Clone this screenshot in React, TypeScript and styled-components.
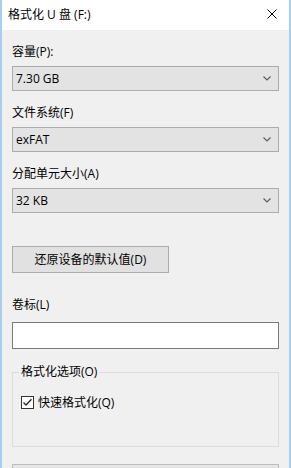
import styled, { createGlobalStyle } from "styled-components";

const GlobalStyle = createGlobalStyle`
  html, body {
    margin: 0;
    padding: 0;
    background: #f0f0f0;
  }
  * {
    box-sizing: border-box;
  }
`

const Window = styled.div`
  display: flex;
  flex-direction: column;
  width: 291px;
  height: 468px;
  overflow: hidden;
  border-left: 2px solid #a9cdee;
  border-right: 2px solid #a9cdee;
  background: #f0f0f0;
  font-family: "Open Sans", "Noto Sans CJK SC", sans-serif;
  font-size: 12px;
  color: #000;
`

const TitleBar = styled.div`
  display: flex;
  align-items: center;
  justify-content: space-between;
  height: 30px;
  padding: 0 6px 0 6px;
  background: #fff;
  flex-shrink: 0;
`

const Title = styled.span`
  line-height: 16px;
`

const CloseIcon = styled.svg`
  width: 10px;
  height: 10px;
  margin-right: 6px;
  margin-top: -2px;
`

const Body = styled.div`
  display: flex;
  flex-direction: column;
  padding: 14px 10px 0 10px;
`

const Field = styled.div`
  display: flex;
  flex-direction: column;
  margin-bottom: 14px;
`

const Label = styled.div<{ $gap?: number }>`
  line-height: 16px;
  margin-bottom: ${({ $gap }) => $gap ?? 6}px;
`

const Combo = styled.div`
  display: flex;
  align-items: center;
  justify-content: space-between;
  height: 25px;
  padding: 0 7px 0 3px;
  background: #e3e3e3;
  border: 1px solid #acacac;
  line-height: 16px;
`

const Chevron = styled.svg`
  width: 8px;
  height: 5px;
`

const ResetButton = styled.div`
  display: flex;
  align-items: center;
  justify-content: center;
  width: 157px;
  height: 27px;
  margin: 19px 0 24px 0;
  background: #e1e1e1;
  border: 1px solid #adadad;
  line-height: 16px;
`

const TextInput = styled.div`
  height: 27px;
  background: #fff;
  border: 1px solid #7a7a7a;
`

const GroupBox = styled.fieldset`
  margin: 15px 0 0 0;
  padding: 14px 8px 36px 8px;
  border: 1px solid #dcdcdc;
  min-width: 0;
`

const Legend = styled.legend`
  padding: 0 2px;
  margin-left: -2px;
  line-height: 16px;
`

const CheckRow = styled.div`
  display: flex;
  align-items: center;
  gap: 4px;
  height: 16px;
`

const CheckBox = styled.svg`
  width: 13px;
  height: 13px;
`

const ProgressBar = styled.div`
  height: 18px;
  margin-top: 17px;
  background: #e6e6e6;
  border: 1px solid #bcbcbc;
  flex-shrink: 0;
`

const ComboBox = ({ value }: { value: string }) => (
  <Combo>
    <span>{value}</span>
    <Chevron viewBox="0 0 8 5">
      <path d="M0.5 0.5 L4 4 L7.5 0.5" fill="none" stroke="#5a5a5a" strokeWidth="1.1" />
    </Chevron>
  </Combo>
)

export default function App() {
  return (
    <>
      <GlobalStyle />
      <Window>
        <TitleBar>
          <Title>格式化 U 盘 (F:)</Title>
          <CloseIcon viewBox="0 0 10 10">
            <path d="M0.5 0.5 L9.5 9.5 M9.5 0.5 L0.5 9.5" stroke="#000" strokeWidth="1" />
          </CloseIcon>
        </TitleBar>
        <Body>
          <Field>
            <Label>容量(P):</Label>
            <ComboBox value="7.30 GB" />
          </Field>
          <Field>
            <Label>文件系统(F)</Label>
            <ComboBox value="exFAT" />
          </Field>
          <Field>
            <Label>分配单元大小(A)</Label>
            <ComboBox value="32 KB" />
          </Field>
          <ResetButton>还原设备的默认值(D)</ResetButton>
          <Label $gap={9}>卷标(L)</Label>
          <TextInput />
          <GroupBox>
            <Legend>格式化选项(O)</Legend>
            <CheckRow>
              <CheckBox viewBox="0 0 13 13">
                <rect x="0.5" y="0.5" width="12" height="12" fill="#fff" stroke="#333" />
                <path d="M2.5 6.5 L5 9 L10.5 3.2" fill="none" stroke="#222" strokeWidth="1.3" />
              </CheckBox>
              <span>快速格式化(Q)</span>
            </CheckRow>
          </GroupBox>
          <ProgressBar />
        </Body>
      </Window>
    </>
  );
}
